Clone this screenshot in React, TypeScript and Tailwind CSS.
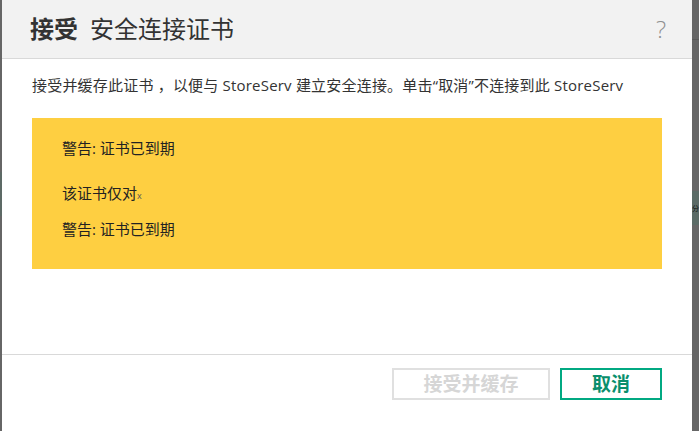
import React from "react";

const font = { fontFamily: '"Open Sans", "Noto Sans CJK SC", sans-serif' };

export default function App() {
  return (
    <div className="flex h-[431px] w-[699px] overflow-hidden bg-[#666666]" style={font}>
      <div className="relative w-[2px] shrink-0 bg-[#666666]">
        <div className="absolute left-0 top-[172px] h-[44px] w-[2px] bg-[#5d6a66]" />
      </div>

      <div className="flex w-[690px] shrink-0 flex-col bg-white">
        <div className="flex h-[59px] shrink-0 items-center justify-between border-b border-[#d9d9d9] bg-[#f2f2f2] pl-[28px] pr-[26px]">
          <div className="flex items-baseline gap-[12px] text-[#333333]">
            <span className="text-[24px] font-bold leading-none">接受</span>
            <span className="text-[24px] leading-none">安全连接证书</span>
          </div>
          <span className="text-[24px] font-light leading-none text-[#8f8f8f]">?</span>
        </div>

        <div className="flex-1 px-[30px] pt-[16px]">
          <p className="whitespace-nowrap text-[15px] leading-[20px] tracking-[0.2px] text-[#333333]">
            接受并缓存此证书 ，以便与 StoreServ 建立安全连接。单击“取消”不连接到此 StoreServ
          </p>
          <div className="mt-[23px] h-[151px] bg-[#fecf41] pl-[30px] pt-[20px] text-[15px] leading-[20px] text-[#222222]">
            <p>警告: 证书已到期</p>
            <p className="mt-[25px]">
              该证书仅对<span className="text-[9px] text-[#555555]">x</span>
            </p>
            <p className="mt-[13px]">警告: 证书已到期</p>
          </div>
        </div>

        <div className="flex h-[77px] shrink-0 justify-end gap-[10px] border-t border-[#d9d9d9] pr-[30px] pt-[13px]">
          <button
            type="button"
            disabled
            className="h-[32px] w-[158px] border-2 border-[#e0e0e0] bg-white text-[19px] font-bold text-[#d6d6d6]"
          >
            接受并缓存
          </button>
          <button
            type="button"
            className="h-[32px] w-[102px] border-2 border-[#01a982] bg-white text-[19px] font-bold text-[#0a8f6d]"
          >
            取消
          </button>
        </div>
      </div>

      <div className="relative flex-1 bg-[#666666]">
        <div className="absolute left-0 top-[39px] h-px w-full bg-[#5a5a5a]" />
        <div className="absolute left-0 top-[191px] flex h-[34px] w-full items-center overflow-hidden bg-[#5b6b66]">
          <span className="text-[7px] leading-none text-[#111111]">分</span>
        </div>
      </div>
    </div>
  );
}
